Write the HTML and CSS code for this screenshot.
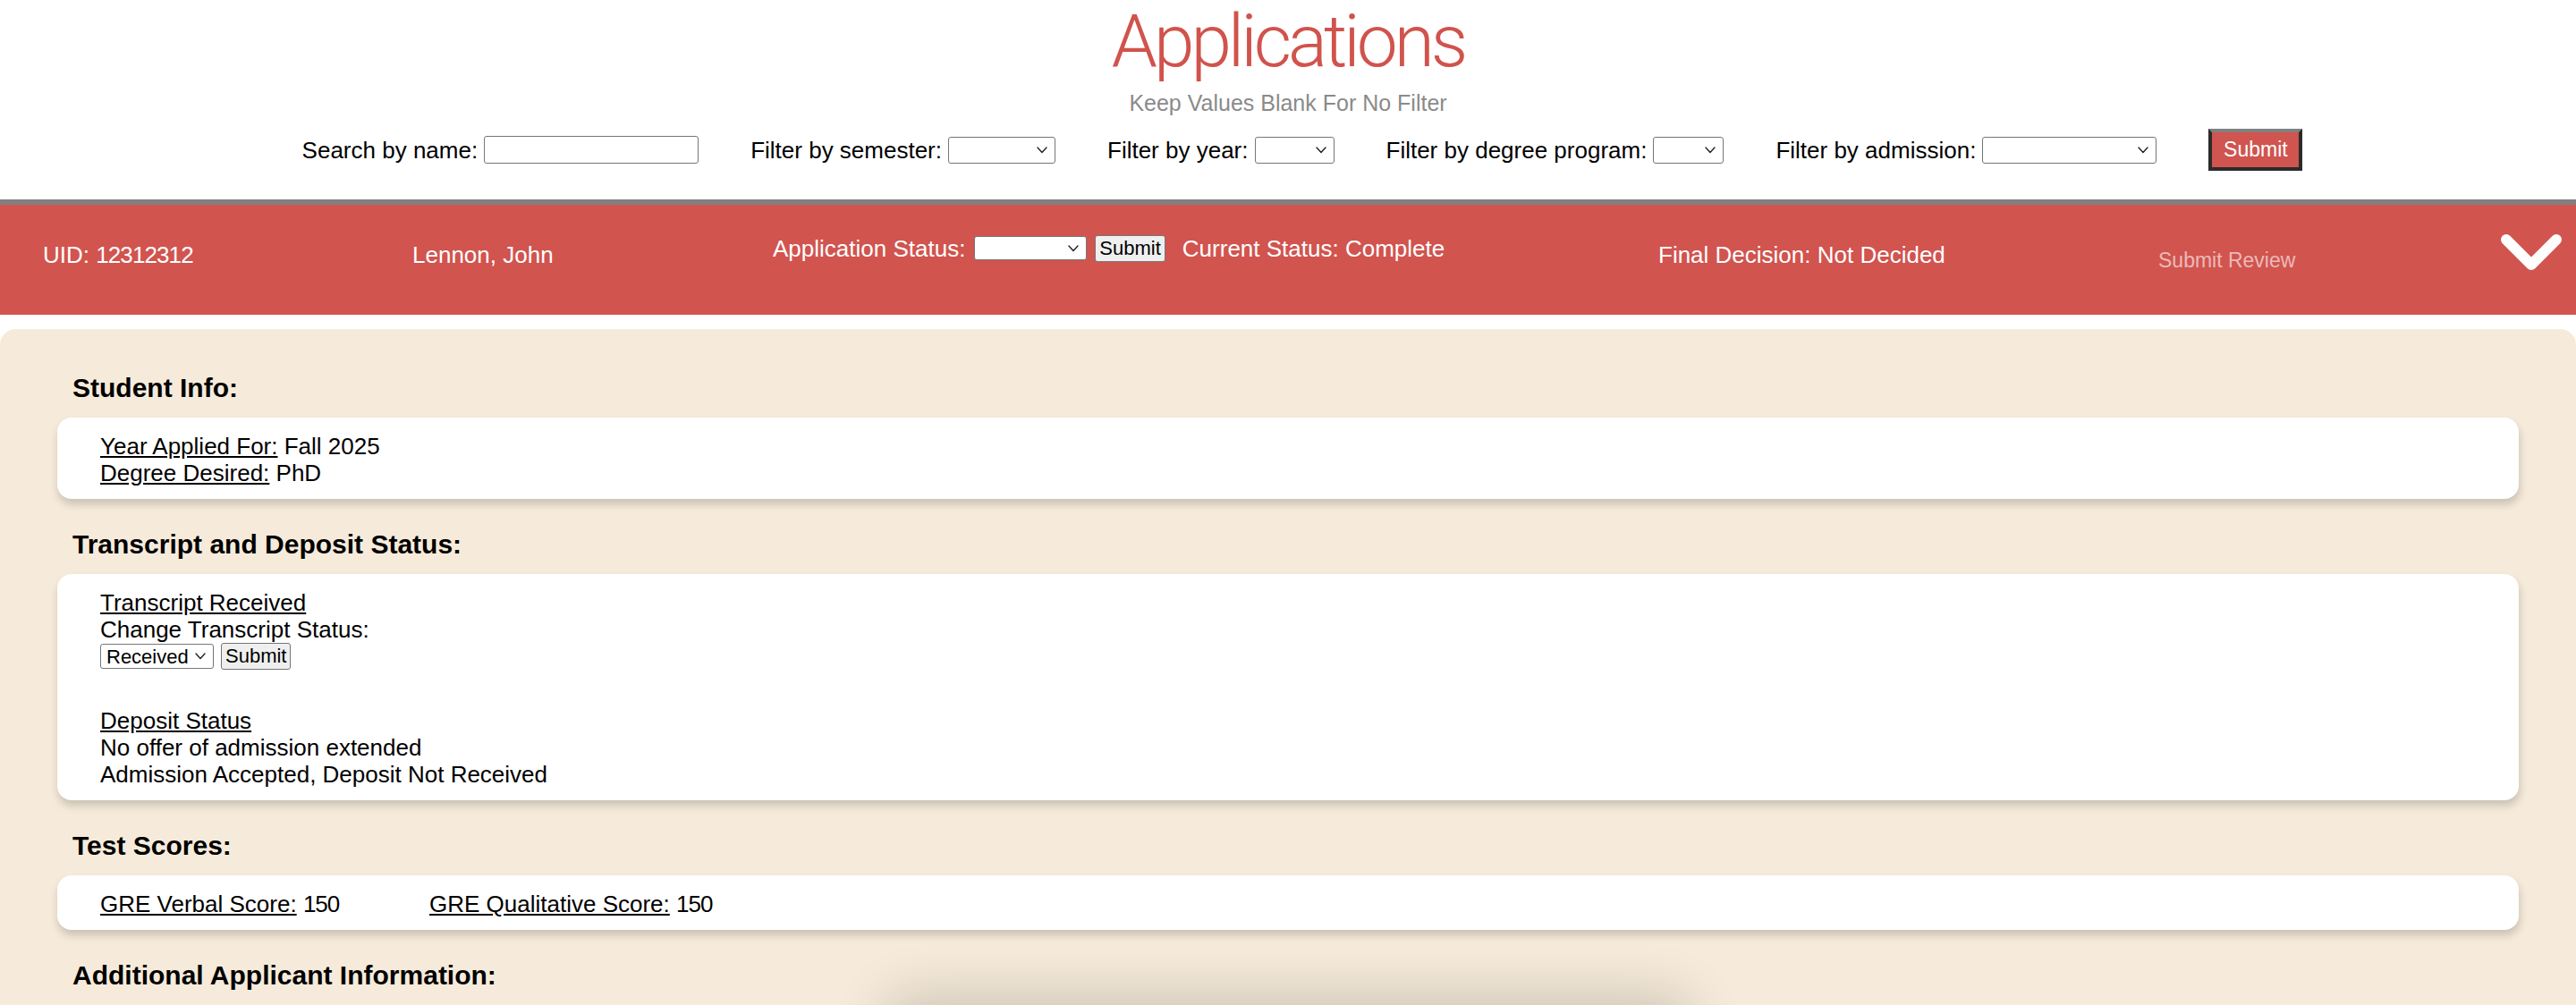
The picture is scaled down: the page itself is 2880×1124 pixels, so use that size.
FILE: index.html
```html
<!DOCTYPE html>
<html lang="en">
<head>
<meta charset="utf-8">
<title>Applications</title>
<link rel="stylesheet" href="styles.css">
</head>
<body>
<header class="top">
  <h1 class="title">Applications</h1>
  <p class="hint">Keep Values Blank For No Filter</p>
  <form class="filters">
    <label class="filter">Search by name: <input type="text" class="ctl f-name"></label>
    <label class="filter">Filter by semester:
      <span class="sel-wrap"><select class="ctl f-sem"><option></option></select><svg class="sel-arrow" width="12" height="8" viewBox="0 0 12 8"><polyline points="1,1 6,6.5 11,1"/></svg></span>
    </label>
    <label class="filter">Filter by year:
      <span class="sel-wrap"><select class="ctl f-year"><option></option></select><svg class="sel-arrow" width="12" height="8" viewBox="0 0 12 8"><polyline points="1,1 6,6.5 11,1"/></svg></span>
    </label>
    <label class="filter">Filter by degree program:
      <span class="sel-wrap"><select class="ctl f-deg"><option></option></select><svg class="sel-arrow" width="12" height="8" viewBox="0 0 12 8"><polyline points="1,1 6,6.5 11,1"/></svg></span>
    </label>
    <label class="filter">Filter by admission:
      <span class="sel-wrap"><select class="ctl f-adm"><option></option></select><svg class="sel-arrow" width="12" height="8" viewBox="0 0 12 8"><polyline points="1,1 6,6.5 11,1"/></svg></span>
    </label>
    <button type="button" class="go">Submit</button>
  </form>
</header>

<div class="app-bar">
  <span class="cell">UID: <span class="num-s">12312312</span></span>
  <span class="cell">Lennon, John</span>
  <form class="status">
    <span class="status-label">Application Status:</span>
    <span class="sel-wrap"><select class="mini-sel w-status"><option></option></select><svg class="sel-arrow" width="12" height="8" viewBox="0 0 12 8"><polyline points="1,1 6,6.5 11,1"/></svg></span>
    <button type="button" class="mini-btn">Submit</button>
    <span class="current">Current Status: Complete</span>
  </form>
  <span class="cell">Final Decision: Not Decided</span>
  <a class="review">Submit Review</a>
  <svg class="chev" width="70" height="42" viewBox="0 0 70 42" aria-hidden="true">
    <polyline points="7,7 35,35 63,7" fill="none" stroke="#fff" stroke-width="12" stroke-linecap="round" stroke-linejoin="round"/>
  </svg>
</div>

<main class="panel">
  <h3 class="sec-title">Student Info:</h3>
  <div class="card">
    <div><span class="key">Year Applied For:</span> Fall 2025</div>
    <div><span class="key">Degree Desired:</span> PhD</div>
  </div>

  <h3 class="sec-title">Transcript and Deposit Status:</h3>
  <div class="card">
    <div><span class="key">Transcript Received</span></div>
    <div>Change Transcript Status:</div>
    <div class="ctl-row">
      <span class="sel-wrap"><select class="mini-sel w-rec"><option>Received</option></select><svg class="sel-arrow" width="12" height="8" viewBox="0 0 12 8"><polyline points="1,1 6,6.5 11,1"/></svg></span>
      <button type="button" class="mini-btn">Submit</button>
    </div>
    <div class="deposit">
      <div><span class="key">Deposit Status</span></div>
      <div>No offer of admission extended</div>
      <div>Admission Accepted, Deposit Not Received</div>
    </div>
  </div>

  <h3 class="sec-title">Test Scores:</h3>
  <div class="card scores">
    <div><span class="key">GRE Verbal Score:</span> <span class="num">150</span></div>
    <div><span class="key">GRE Qualitative Score:</span> <span class="num">150</span></div>
  </div>

  <h3 class="sec-title">Additional Applicant Information:</h3>
  <div class="extra"></div>
</main>
</body>
</html>
```

FILE: styles.css
```css
html, body {
  margin: 0;
  padding: 0;
  background: #ffffff;
}

body {
  font-family: "Liberation Sans", Arial, Helvetica, sans-serif;
  font-size: 26px;
  line-height: 30px;
  color: #000;
}

/* ---------- header ---------- */
.top {
  display: flex;
  flex-direction: column;
  align-items: center;
  padding-bottom: 32px;
}

.title {
  margin: 0;
  font-family: Roboto, "Liberation Sans", sans-serif;
  font-weight: 300;
  font-size: 82px;
  line-height: 92px;
  letter-spacing: -4px;
  color: #d0534c;
}

.hint {
  margin: 8px 0 0;
  font-size: 25px;
  line-height: 30px;
  color: #8a8a8a;
}

.filters {
  display: flex;
  align-items: center;
  gap: 58px;
  margin: 14px 0 0;
  padding-left: 32px;
  height: 47px;
}

.filter {
  display: flex;
  align-items: center;
  gap: 7px;
  white-space: nowrap;
}

/* select with drawn chevron */
.sel-wrap {
  position: relative;
  display: inline-flex;
  align-items: center;
}

.sel-wrap select {
  -webkit-appearance: none;
  appearance: none;
  padding: 0 26px 0 6px;
}

.sel-arrow {
  position: absolute;
  right: 9px;
  top: 50%;
  margin-top: -4px;
  pointer-events: none;
  fill: none;
  stroke: #222;
  stroke-width: 1.4;
  stroke-linecap: round;
  stroke-linejoin: round;
}

.ctl {
  box-sizing: border-box;
  height: 30px;
  margin: 0;
  border: 1px solid #767676;
  border-radius: 3px;
  background: #fff;
  font-family: "Liberation Sans", Arial, sans-serif;
  font-size: 20px;
}

.f-name { width: 240px; height: 31px; }
.f-sem { width: 120px; }
.f-year { width: 89px; }
.f-deg { width: 79px; }
.f-adm { width: 195px; }

.go {
  box-sizing: border-box;
  width: 105px;
  height: 47px;
  margin: 0;
  padding: 0;
  background: #d0544f;
  color: #fff;
  font-family: "Liberation Sans", Arial, sans-serif;
  font-size: 23px;
  border: 4px solid;
  border-color: #808080 #2b2b2b #2b2b2b #2b2b2b;
}

/* ---------- application bar ---------- */
.app-bar {
  display: grid;
  grid-template-columns: 413px 403px 990px 559px 382px auto;
  align-items: center;
  height: 123px;
  padding: 0 0 0 48px;
  border-top: 6px solid #808080;
  background: #d1544f;
  color: #fff;
  margin-bottom: 16px;
}

.cell {
  white-space: nowrap;
  margin-bottom: 12px;
}

.num-s { letter-spacing: -0.9px; }

.status {
  display: flex;
  align-items: center;
  white-space: nowrap;
  margin: 0 0 26px;
  height: 30px;
}

.status-label { margin-right: 10px; }
.status .mini-btn { margin-left: 9px; }
.current { margin-left: 19px; }

.mini-sel {
  box-sizing: border-box;
  height: 28px;
  margin: 0;
  border: 1px solid #767676;
  border-radius: 3px;
  background: #fff;
  color: #000;
  font-family: "Liberation Sans", Arial, sans-serif;
  font-size: 22px;
}

.w-status { width: 126px; height: 27px; }
.w-rec { width: 127px; }

.mini-btn {
  box-sizing: border-box;
  height: 30px;
  margin: 0;
  padding: 0 4px;
  border: 1px solid #767676;
  border-radius: 3px;
  background: #efefef;
  color: #000;
  font-family: "Liberation Sans", Arial, sans-serif;
  font-size: 22px;
}

.review {
  font-size: 23px;
  line-height: 26px;
  color: rgba(255, 255, 255, 0.6);
  white-space: nowrap;
}

.chev {
  display: block;
  margin-bottom: 18px;
}

/* ---------- panel ---------- */
.panel {
  display: block;
  background: #f6ebda;
  border-radius: 18px 18px 0 0;
  padding: 15px 64px 80px;
  overflow: hidden;
}

.sec-title {
  margin: 34px 0 16px 17px;
  font-size: 30px;
  line-height: 34px;
  font-weight: bold;
}

.card {
  background: #fff;
  border-radius: 16px;
  padding: 17px 48px 14px;
  box-shadow: 1px 6px 10px rgba(0, 0, 0, 0.18);
}

.key { text-decoration: underline; }

.num { letter-spacing: -1px; }

.ctl-row {
  display: flex;
  align-items: center;
  gap: 8px;
  height: 30px;
}

.deposit { margin-top: 42px; }

.scores {
  display: grid;
  grid-template-columns: 368px auto;
  justify-content: start;
}

.extra {
  width: 880px;
  height: 400px;
  margin: 16px auto 0;
  background: #f6ebda;
  border-radius: 20px;
  box-shadow: 0 0 60px 12px rgba(0, 0, 0, 0.16);
}
```
